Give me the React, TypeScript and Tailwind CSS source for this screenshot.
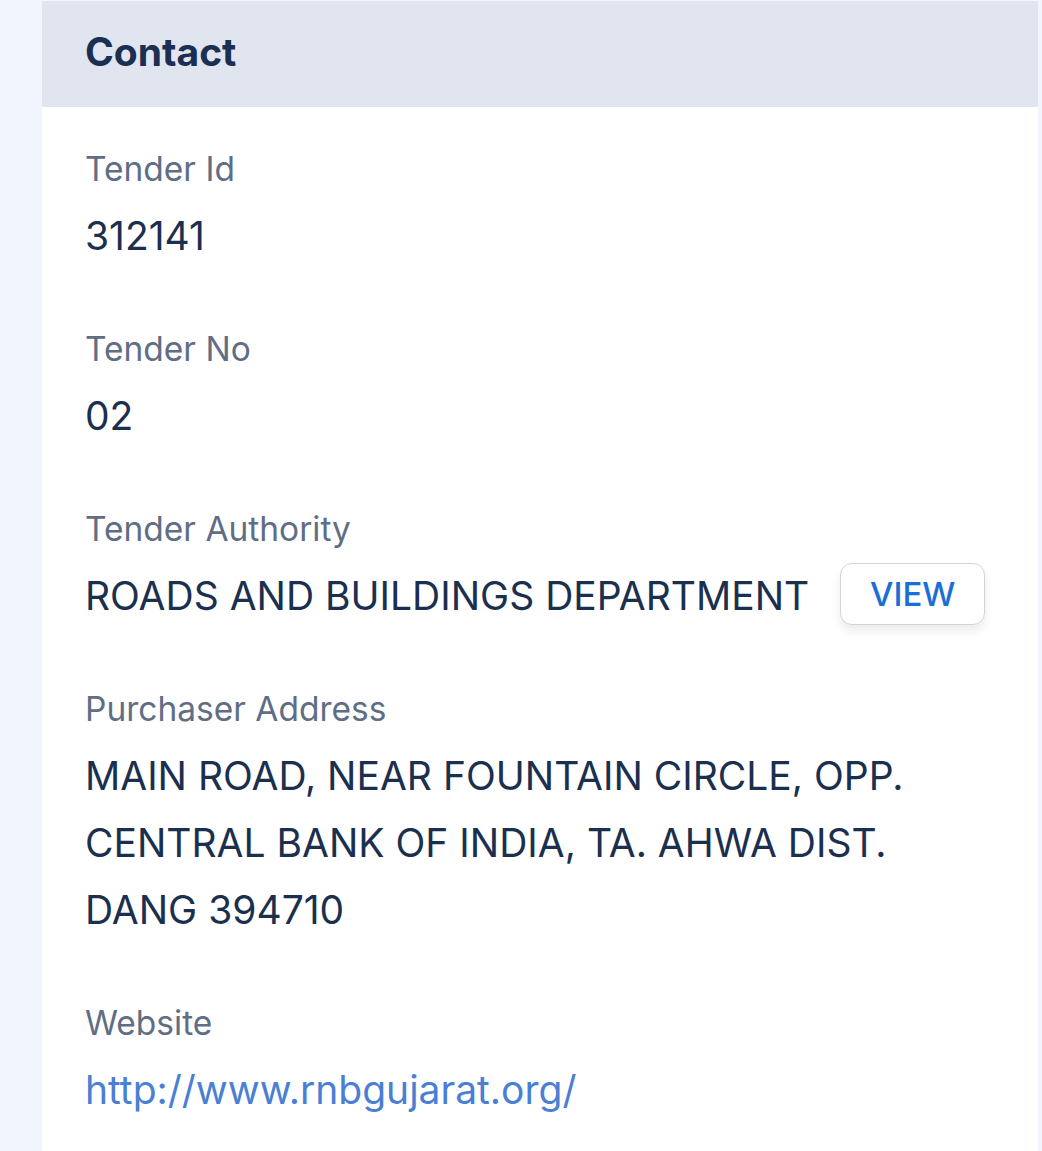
import React from 'react';

const fields = [
  { label: 'Tender Id', value: '312141' },
  { label: 'Tender No', value: '02' },
];

const Label = ({ children }: { children: React.ReactNode }) => (
  <div className="text-[33.5px] leading-[48px] text-[#5f6e85]">{children}</div>
);

const App = () => {
  return (
    <div className="min-h-screen bg-[#f1f5fd] pt-px font-['Inter',sans-serif]">
      <div className="ml-[42px] w-[996px] bg-white min-h-[1150px]">
        {/* Header */}
        <div className="h-[106px] bg-[#e0e5ef] flex items-center px-[43px] pb-[4px]">
          <h2 className="text-[39px] font-bold text-[#1b2f52]">Contact</h2>
        </div>

        <div className="px-[43px] pt-[38px] flex flex-col gap-[56px]">
          {fields.map((f, i) => (
            <div key={`field-${i}`}>
              <Label>{f.label}</Label>
              <div className="mt-[9px] text-[39px] leading-[67px] text-[#1b2f4e]">{f.value}</div>
            </div>
          ))}

          {/* Tender Authority */}
          <div>
            <Label>Tender Authority</Label>
            <div className="mt-[9px] flex items-center gap-[31px] text-[39px] leading-[67px] text-[#1b2f4e]">
              <span>ROADS AND BUILDINGS DEPARTMENT</span>
              <button className="-mt-[3px] h-[62px] w-[145px] flex items-center justify-center rounded-[12px] border-[1.5px] border-[#d4d4d4] bg-white shadow-[0_6px_10px_rgba(0,0,0,0.08)] text-[33px] leading-none font-medium text-[#1a6fd6]">
                VIEW
              </button>
            </div>
          </div>

          {/* Purchaser Address */}
          <div>
            <Label>Purchaser Address</Label>
            <div className="mt-[9px] text-[39px] leading-[67px] text-[#1b2f4e] w-[860px]">
              MAIN ROAD, NEAR FOUNTAIN CIRCLE, OPP. CENTRAL BANK OF INDIA, TA. AHWA DIST. DANG 394710
            </div>
          </div>

          {/* Website */}
          <div>
            <Label>Website</Label>
            <a href="#" className="block mt-[9px] text-[39px] leading-[67px] text-[#4a7fd4]">
              http://www.rnbgujarat.org/
            </a>
          </div>
        </div>
      </div>
    </div>
  );
};

export default App;
